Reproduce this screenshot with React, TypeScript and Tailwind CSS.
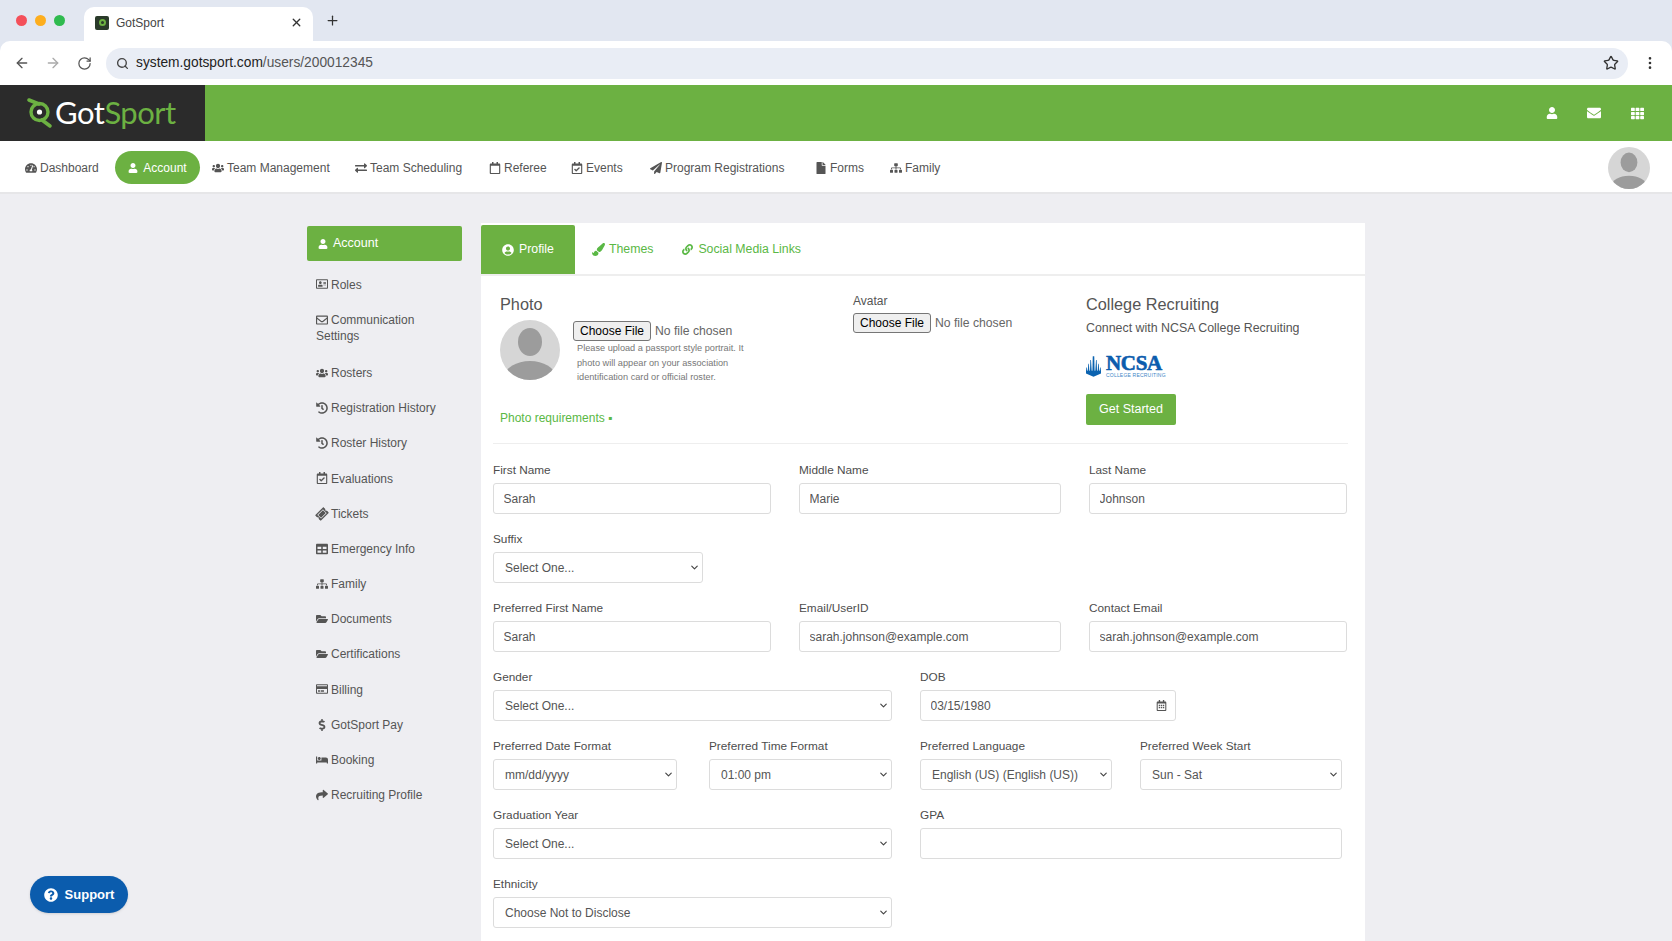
import React from 'react';
import {
    FaTachometerAlt, FaUser, FaUsers, FaExchangeAlt, FaRegCalendar, FaRegCalendarCheck, FaPaperPlane,
    FaFile, FaSitemap, FaEnvelope, FaTh, FaRegAddressCard, FaRegEnvelope, FaHistory, FaTicketAlt,
    FaTable, FaFolderOpen, FaRegCreditCard, FaDollarSign, FaBed, FaShare, FaUserCircle, FaPaintBrush,
    FaLink, FaQuestionCircle, FaRegCalendarAlt,
} from 'react-icons/fa';
import { ArrowLeft, ArrowRight, ChevronDown, EllipsisVertical, Plus, RotateCw, Search, Star, X } from 'lucide-react';

const navItems = [
    { label: 'Dashboard', icon: FaTachometerAlt, width: 'w-[90px]' },
    { label: 'Team Management', icon: FaUsers, width: 'w-[143px]' },
    { label: 'Team Scheduling', icon: FaExchangeAlt, width: 'w-[134px]' },
    { label: 'Referee', icon: FaRegCalendar, width: 'w-[82px]' },
    { label: 'Events', icon: FaRegCalendarCheck, width: 'w-[79px]' },
    { label: 'Program Registrations', icon: FaPaperPlane, width: 'w-[165px]' },
    { label: 'Forms', icon: FaFile, width: 'w-[75px]' },
    { label: 'Family', icon: FaSitemap, width: 'w-[70px]' },
];

const sideItems = [
    { label: 'Roles', icon: FaRegAddressCard },
    { label: 'Communication Settings', icon: FaRegEnvelope },
    { label: 'Rosters', icon: FaUsers },
    { label: 'Registration History', icon: FaHistory },
    { label: 'Roster History', icon: FaHistory },
    { label: 'Evaluations', icon: FaRegCalendarCheck },
    { label: 'Tickets', icon: FaTicketAlt },
    { label: 'Emergency Info', icon: FaTable },
    { label: 'Family', icon: FaSitemap },
    { label: 'Documents', icon: FaFolderOpen },
    { label: 'Certifications', icon: FaFolderOpen },
    { label: 'Billing', icon: FaRegCreditCard },
    { label: 'GotSport Pay', icon: FaDollarSign },
    { label: 'Booking', icon: FaBed },
    { label: 'Recruiting Profile', icon: FaShare },
];

function Field({ label, width, children }: { label: string; width: string; children: React.ReactNode }) {
    return (
        <div className={width}>
            <label className="block h-[16px] mb-[5px] text-[11.8px] leading-[16px] text-[#4d4d4d]">{label}</label>
            {children}
        </div>
    );
}

function TextInput({ value = '' }: { value?: string }) {
    return (
        <input
            type="text"
            defaultValue={value}
            className="w-full h-[31px] px-[9.5px] border border-[#dcdcdc] rounded-[3px] bg-white text-[12px] text-[#555]"
        />
    );
}

function SelectInput({ value }: { value: string }) {
    return (
        <div className="relative">
            <select
                defaultValue={value}
                className="w-full h-[31px] pl-[11px] appearance-none border border-[#dcdcdc] rounded-[3px] bg-white text-[12px] text-[#555]"
            >
                <option value={value}>{value}</option>
            </select>
            <ChevronDown className="absolute right-[3px] top-[10px] w-[11px] h-[11px] text-[#444] pointer-events-none" strokeWidth={2.5} />
        </div>
    );
}

function FileInput() {
    return (
        <input
            type="file"
            className="w-[190px] text-[12.2px] text-[#666] file:mr-[4px] file:h-[20px] file:w-[78px] file:border file:border-[#767676] file:rounded-[3px] file:bg-[#efefef] file:text-[12px] file:text-black"
        />
    );
}

function PersonAvatar({ size }: { size: string }) {
    return (
        <svg viewBox="0 0 60 60" className={size}>
            <defs>
                <clipPath id="avatar-clip">
                    <circle cx="30" cy="30" r="30" />
                </clipPath>
            </defs>
            <circle cx="30" cy="30" r="30" fill="#d6d6d6" />
            <g clipPath="url(#avatar-clip)" fill="#9c9c9c">
                <ellipse cx="30" cy="22" rx="12" ry="14" />
                <ellipse cx="30" cy="56" rx="25" ry="15" />
            </g>
        </svg>
    );
}

function LogoMark() {
    return (
        <svg viewBox="0 0 30 34" className="w-[30px] h-[34px]" fill="none" stroke="#6cb142" strokeLinecap="round">
            <circle cx="14.5" cy="17" r="8.5" strokeWidth="3.4" />
            <path d="M4 5 L14 9" strokeWidth="3.6" />
            <path d="M17 25 L25 31" strokeWidth="3.6" />
            <circle cx="14.5" cy="17" r="2.6" fill="#fff" stroke="none" />
        </svg>
    );
}

function NcsaMark() {
    return (
        <svg viewBox="0 0 16 22" className="w-[15px] h-[21px]" fill="#0b63b0">
            <path d="M7.2 0 L8 0 L8.8 0 L9.2 18 L6.8 18 Z" />
            <path d="M4.6 4 L5.3 4 L6.2 18 L4.2 18 Z" />
            <path d="M11.4 4 L10.7 4 L9.8 18 L11.8 18 Z" />
            <path d="M2.4 8 L3 8 L3.7 17 L1.9 17 Z" />
            <path d="M13.6 8 L13 8 L12.3 17 L14.1 17 Z" />
            <path d="M0.4 12 L1 12 L1.4 16 L0 16 Z" />
            <path d="M15.6 12 L15 12 L14.6 16 L16 16 Z" />
            <path d="M0 15.5 L16 15.5 L16 18.5 L8 22 L0 18.5 Z" />
        </svg>
    );
}

function BrowserChrome() {
    return (
        <div className="bg-[#e2e7f1]">
            <div className="h-[41px] flex items-end">
                <div className="w-[84px] h-[41px] flex items-center gap-[8px] pl-[16px]">
                    <span className="w-[11px] h-[11px] rounded-full bg-[#f4505a]" />
                    <span className="w-[11px] h-[11px] rounded-full bg-[#fdae1e]" />
                    <span className="w-[11px] h-[11px] rounded-full bg-[#2fbb4f]" />
                </div>
                <div className="w-[229px] h-[34px] flex items-center rounded-t-[10px] bg-white pl-[11px] pr-[10px] pb-[3px]">
                    <span className="w-[14px] h-[14px] rounded-[2px] bg-[#2a3a2a] flex items-center justify-center">
                        <span className="w-[7px] h-[7px] rounded-full border-2 border-[#6cb142]" />
                    </span>
                    <span className="ml-[7px] flex-1 text-[12px] text-[#444]">GotSport</span>
                    <X className="w-[13px] h-[13px] text-[#333]" strokeWidth={2.5} />
                </div>
                <Plus className="ml-[12px] mb-[13px] w-[15px] h-[15px] text-[#333]" />
            </div>
            <div className="h-[44px] flex items-center bg-white rounded-t-[10px] pl-[14px] pr-[14px]">
                <ArrowLeft className="w-[16px] h-[16px] text-[#555]" />
                <ArrowRight className="ml-[15px] w-[16px] h-[16px] text-[#aaa]" />
                <RotateCw className="ml-[16px] w-[15px] h-[15px] text-[#555]" />
                <div className="ml-[14px] flex-1 h-[31px] flex items-center rounded-full bg-[#e9edf5] pl-[10px] pr-[9px]">
                    <Search className="w-[13px] h-[13px] text-[#444]" strokeWidth={2.5} />
                    <span className="ml-[7px] flex-1 text-[13.75px] text-[#222]">
                        system.gotsport.com<span className="text-[#555]">/users/200012345</span>
                    </span>
                    <Star className="w-[16px] h-[16px] text-[#333]" />
                </div>
                <EllipsisVertical className="ml-[14px] w-[16px] h-[16px] text-[#333]" />
            </div>
        </div>
    );
}

function TopBar() {
    return (
        <div className="h-[56px] flex items-center bg-[#6cb142]">
            <div className="w-[205px] h-full flex items-center bg-[#2b2b2b] pl-[25px] pb-[2px]">
                <LogoMark />
                <span className="text-[31px] tracking-[-0.5px] font-['Lato',sans-serif] leading-none text-white">
                    Got<span className="text-[#6cb142]">Sport</span>
                </span>
            </div>
            <div className="ml-auto flex items-center pr-[28px] text-white">
                <FaUser className="text-[12px]" />
                <FaEnvelope className="ml-[29px] text-[14px]" />
                <FaTh className="ml-[30px] text-[13px]" />
            </div>
        </div>
    );
}

function NavBar() {
    return (
        <div className="h-[53px] flex items-center bg-white border-b-2 border-[#e6e6e8] pl-[25px] pr-[22px] pt-[2px] text-[12px] text-[#555]">
            <NavLink {...navItems[0]} />
            <div className="w-[85px] h-[33px] flex items-center justify-center gap-[5px] rounded-full bg-[#6cb142] text-white">
                <FaUser className="text-[10px]" />
                <span>Account</span>
            </div>
            <span className="w-[12px]" />
            {navItems.slice(1).map(item => <NavLink key={item.label} {...item} />)}
            <div className="ml-auto">
                <PersonAvatar size="w-[42px] h-[42px]" />
            </div>
        </div>
    );
}

function NavLink({ label, icon: Icon, width }: { label: string; icon: React.ElementType; width: string }) {
    return (
        <div className={`${width} flex items-center gap-[3px] whitespace-nowrap`}>
            <Icon className="text-[12px] shrink-0" />
            <span>{label}</span>
        </div>
    );
}

function Sidebar() {
    return (
        <div className="w-[155px] mt-[3px] text-[12px] text-[#555]">
            <div className="h-[35px] flex items-center gap-[5px] pl-[11px] pb-[-1px] rounded-[2px] bg-[#6cb142] text-white text-[12.5px]">
                <FaUser className="text-[10px]" />
                <span>Account</span>
            </div>
            <div className="mt-[6px]">
                {sideItems.map(({ label, icon: Icon }) => (
                    <div
                        key={label}
                        className={label === 'Communication Settings'
                            ? 'pt-[9.6px] pb-[11.6px] pl-[9px] pr-[20px] leading-[16px]'
                            : 'py-[9.6px] pl-[9px] pr-[20px] leading-[16px]'}
                    >
                        <Icon className={label === 'Tickets'
                            ? 'inline-block mr-[3px] mb-[2px] text-[12px] -rotate-45'
                            : 'inline-block mr-[3px] mb-[2px] text-[12px]'} />
                        {label}
                    </div>
                ))}
            </div>
        </div>
    );
}

function TabsHeader() {
    return (
        <div className="h-[51px] mt-[2px] flex border-b-2 border-[#eeeeee] text-[12.3px] text-[#5ab845]">
            <div className="w-[94px] h-[49px] flex items-center justify-center gap-[5px] rounded-t-[2px] bg-[#6cb142] text-white">
                <FaUserCircle className="text-[12px]" />
                <span>Profile</span>
            </div>
            <div className="ml-[17px] h-[49px] flex items-center gap-[4px]">
                <FaPaintBrush className="text-[13px]" />
                <span>Themes</span>
            </div>
            <div className="ml-[29px] h-[49px] flex items-center gap-[5px]">
                <FaLink className="text-[11px]" />
                <span>Social Media Links</span>
            </div>
        </div>
    );
}

function PhotoSection() {
    return (
        <div className="h-[168px] flex border-b border-[#eeeeee] text-[#555]">
            <div className="w-[360px] pl-[7px] pt-[18px]">
                <h3 className="text-[16.3px] leading-[20px]">Photo</h3>
                <div className="mt-[6px] flex">
                    <PersonAvatar size="w-[60px] h-[60px]" />
                    <div className="ml-[13px] -mt-[2px]">
                        <FileInput />
                        <p className="-mt-[1px] ml-[4px] text-[9.2px] leading-[14.5px] text-[#777]">
                            Please upload a passport style portrait. It<br />
                            photo will appear on your association<br />
                            identification card or official roster.
                        </p>
                    </div>
                </div>
                <p className="mt-[24px] text-[12px] text-[#5ab845]">Photo requirements ▪</p>
            </div>
            <div className="w-[233px] pt-[17px]">
                <label className="block text-[12px] leading-[16px]">Avatar</label>
                <div className="mt-[1px]"><FileInput /></div>
            </div>
            <div className="pt-[18px]">
                <h3 className="text-[16.3px] leading-[20px]">College Recruiting</h3>
                <p className="mt-[6px] w-[213px] overflow-hidden whitespace-nowrap text-[12.4px] leading-[16px]">Connect with NCSA College Recruiting</p>
                <div className="mt-[18px] h-[24px] flex items-center">
                    <NcsaMark />
                    <div className="ml-[5px] flex flex-col text-[#0b5cad]">
                        <span className="font-['Liberation_Serif',serif] font-bold text-[21px] leading-[17px] tracking-[-0.3px] [-webkit-text-stroke:0.6px_#0b5cad]">NCSA</span>
                        <span className="text-[5px] leading-[6px] tracking-[0.2px] text-[#3d85c6]">COLLEGE RECRUITING</span>
                    </div>
                </div>
                <button className="mt-[16px] w-[90px] h-[31px] rounded-[2px] bg-[#6cb142] text-[12.5px] text-white">Get Started</button>
            </div>
        </div>
    );
}

function ProfileForm() {
    return (
        <div className="mt-[18px] flex flex-col gap-[17px]">
            <div className="flex gap-[28px]">
                <Field label="First Name" width="w-[278px]"><TextInput value="Sarah" /></Field>
                <Field label="Middle Name" width="w-[262px]"><TextInput value="Marie" /></Field>
                <Field label="Last Name" width="w-[258px]"><TextInput value="Johnson" /></Field>
            </div>
            <Field label="Suffix" width="w-[210px]"><SelectInput value="Select One..." /></Field>
            <div className="flex gap-[28px]">
                <Field label="Preferred First Name" width="w-[278px]"><TextInput value="Sarah" /></Field>
                <Field label="Email/UserID" width="w-[262px]"><TextInput value="sarah.johnson@example.com" /></Field>
                <Field label="Contact Email" width="w-[258px]"><TextInput value="sarah.johnson@example.com" /></Field>
            </div>
            <div className="flex gap-[28px]">
                <Field label="Gender" width="w-[399px]"><SelectInput value="Select One..." /></Field>
                <Field label="DOB" width="w-[256px]">
                    <div className="relative">
                        <TextInput value="03/15/1980" />
                        <FaRegCalendarAlt className="absolute right-[9px] top-[10px] text-[11px] text-[#555]" />
                    </div>
                </Field>
            </div>
            <div className="flex gap-[28px]">
                <div className="w-[399px] flex gap-[32px]">
                    <Field label="Preferred Date Format" width="w-[184px]"><SelectInput value="mm/dd/yyyy" /></Field>
                    <Field label="Preferred Time Format" width="w-[183px]"><SelectInput value="01:00 pm" /></Field>
                </div>
                <Field label="Preferred Language" width="w-[192px]"><SelectInput value="English (US) (English (US))" /></Field>
                <Field label="Preferred Week Start" width="w-[202px]"><SelectInput value="Sun - Sat" /></Field>
            </div>
            <div className="flex gap-[28px]">
                <Field label="Graduation Year" width="w-[399px]"><SelectInput value="Select One..." /></Field>
                <Field label="GPA" width="w-[422px]"><TextInput /></Field>
            </div>
            <Field label="Ethnicity" width="w-[399px]"><SelectInput value="Choose Not to Disclose" /></Field>
        </div>
    );
}

export default function App() {
    return (
        <div className="relative h-screen overflow-hidden bg-[#eeeef2] font-['Liberation_Sans',Arial,sans-serif]">
            <BrowserChrome />
            <TopBar />
            <NavBar />
            <div className="ml-[307px] pt-[29px] flex gap-[19px]">
                <Sidebar />
                <div className="w-[884px] h-[800px] bg-white">
                    <TabsHeader />
                    <div className="pl-[12px] pr-[17px]">
                        <PhotoSection />
                        <ProfileForm />
                    </div>
                </div>
            </div>
            <div className="absolute left-[30px] top-[876px] w-[98px] h-[37px] flex items-center justify-center gap-[7px] rounded-full bg-[#0b5cad] text-[13px] font-bold text-white shadow">
                <FaQuestionCircle className="text-[14px]" />
                <span>Support</span>
            </div>
        </div>
    );
}
